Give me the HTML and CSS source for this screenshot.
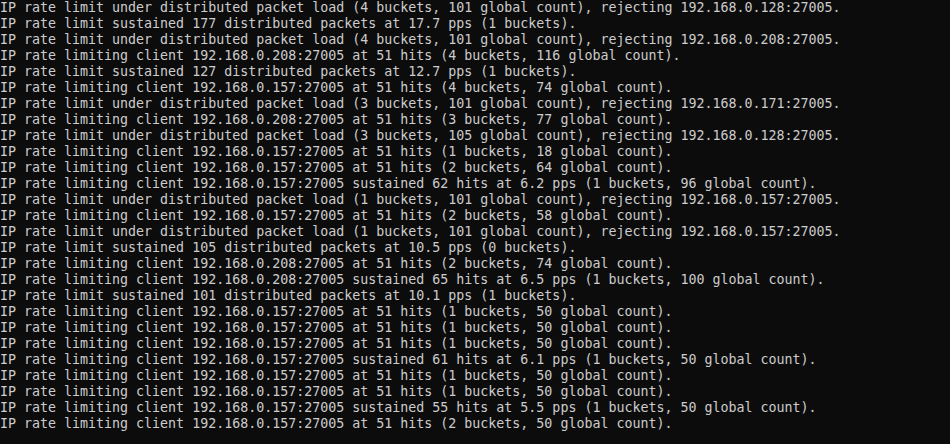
FILE: index.html
```html
<!DOCTYPE html>
<html>
<head>
<meta charset="utf-8">
<link rel="stylesheet" href="styles.css">
</head>
<body>
<pre class="console">IP rate limit under distributed packet load (4 buckets, 101 global count), rejecting 192.168.0.128:27005.
IP rate limit sustained 177 distributed packets at 17.7 pps (1 buckets).
IP rate limit under distributed packet load (4 buckets, 101 global count), rejecting 192.168.0.208:27005.
IP rate limiting client 192.168.0.208:27005 at 51 hits (4 buckets, 116 global count).
IP rate limit sustained 127 distributed packets at 12.7 pps (1 buckets).
IP rate limiting client 192.168.0.157:27005 at 51 hits (4 buckets, 74 global count).
IP rate limit under distributed packet load (3 buckets, 101 global count), rejecting 192.168.0.171:27005.
IP rate limiting client 192.168.0.208:27005 at 51 hits (3 buckets, 77 global count).
IP rate limit under distributed packet load (3 buckets, 105 global count), rejecting 192.168.0.128:27005.
IP rate limiting client 192.168.0.157:27005 at 51 hits (1 buckets, 18 global count).
IP rate limiting client 192.168.0.157:27005 at 51 hits (2 buckets, 64 global count).
IP rate limiting client 192.168.0.157:27005 sustained 62 hits at 6.2 pps (1 buckets, 96 global count).
IP rate limit under distributed packet load (1 buckets, 101 global count), rejecting 192.168.0.157:27005.
IP rate limiting client 192.168.0.157:27005 at 51 hits (2 buckets, 58 global count).
IP rate limit under distributed packet load (1 buckets, 101 global count), rejecting 192.168.0.157:27005.
IP rate limit sustained 105 distributed packets at 10.5 pps (0 buckets).
IP rate limiting client 192.168.0.208:27005 at 51 hits (2 buckets, 74 global count).
IP rate limiting client 192.168.0.208:27005 sustained 65 hits at 6.5 pps (1 buckets, 100 global count).
IP rate limit sustained 101 distributed packets at 10.1 pps (1 buckets).
IP rate limiting client 192.168.0.157:27005 at 51 hits (1 buckets, 50 global count).
IP rate limiting client 192.168.0.157:27005 at 51 hits (1 buckets, 50 global count).
IP rate limiting client 192.168.0.157:27005 at 51 hits (1 buckets, 50 global count).
IP rate limiting client 192.168.0.157:27005 sustained 61 hits at 6.1 pps (1 buckets, 50 global count).
IP rate limiting client 192.168.0.157:27005 at 51 hits (1 buckets, 50 global count).
IP rate limiting client 192.168.0.157:27005 at 51 hits (1 buckets, 50 global count).
IP rate limiting client 192.168.0.157:27005 sustained 55 hits at 5.5 pps (1 buckets, 50 global count).
IP rate limiting client 192.168.0.157:27005 at 51 hits (2 buckets, 50 global count).</pre>
</body>
</html>
```
FILE: styles.css
```css
html, body {
  margin: 0;
  padding: 0;
  background: #0c0c0c;
  height: 100%;
  overflow: hidden;
}
.console {
  margin: 0;
  padding: 0;
  color: #cccccc;
  font-family: "DejaVu Sans Mono", "Liberation Mono", monospace;
  font-size: 13.3px;
  line-height: 16px;
  letter-spacing: 0;
  white-space: pre;
}
```
